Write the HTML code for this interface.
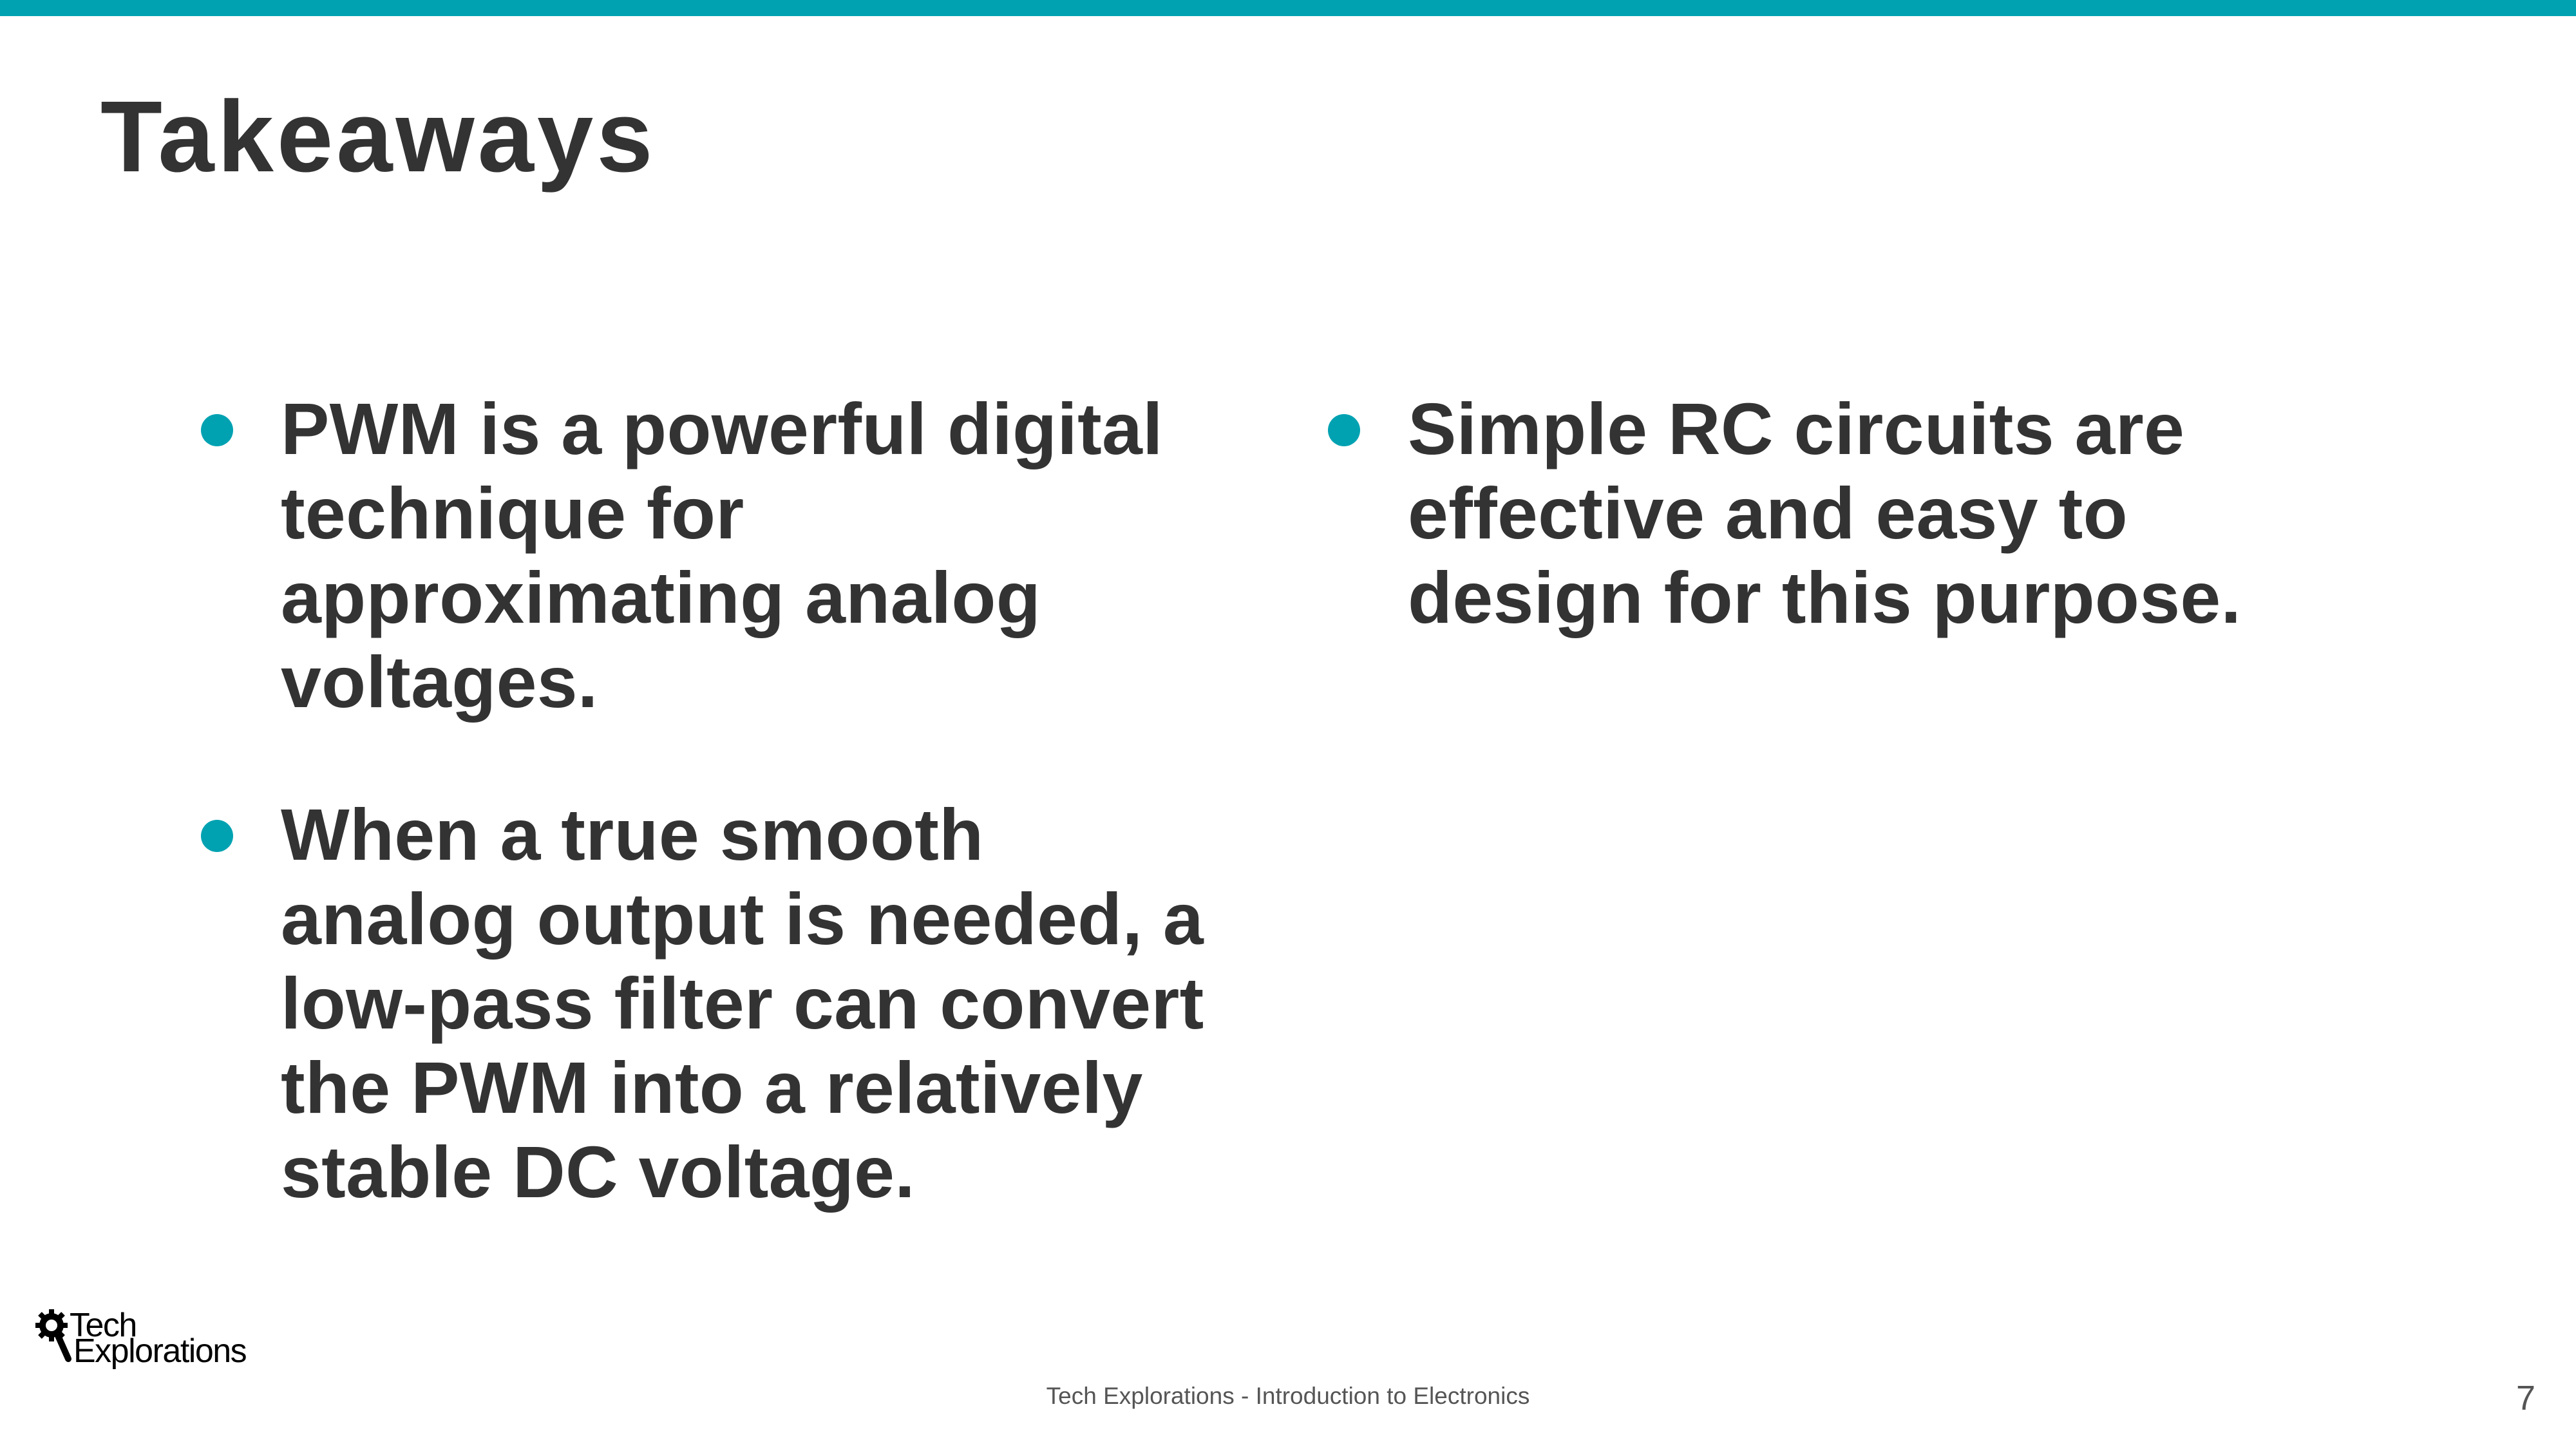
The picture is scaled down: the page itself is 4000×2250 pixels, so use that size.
<!DOCTYPE html>
<html><head><meta charset="utf-8"><style>
html,body{margin:0;padding:0}
body{width:4000px;height:2250px;position:relative;background:#fff;overflow:hidden;font-family:"Liberation Sans",sans-serif;color:#333}
.bar{position:absolute;left:0;top:0;width:4000px;height:25px;background:#00a2b2}
.t{position:absolute;white-space:nowrap;line-height:1}
.title{left:156px;top:134px;font-size:157px;font-weight:bold;letter-spacing:5px}
.line{font-size:113px;font-weight:bold;letter-spacing:0.3px}
.dot{position:absolute;width:50px;height:50px;border-radius:50%;background:#00a2b2}
.foot{font-size:37px;color:#555}
</style></head><body>
<div class="bar"></div>
<div class="t title">Takeaways</div>

<div class="dot" style="left:312px;top:643px"></div>
<div class="t line" style="left:436px;top:610px">PWM is a powerful digital</div>
<div class="t line" style="left:436px;top:741px">technique for</div>
<div class="t line" style="left:436px;top:872px">approximating analog</div>
<div class="t line" style="left:436px;top:1003px">voltages.</div>

<div class="dot" style="left:312px;top:1273px"></div>
<div class="t line" style="left:436px;top:1240px">When a true smooth</div>
<div class="t line" style="left:436px;top:1371px">analog output is needed, a</div>
<div class="t line" style="left:436px;top:1502px">low-pass filter can convert</div>
<div class="t line" style="left:436px;top:1633px">the PWM into a relatively</div>
<div class="t line" style="left:436px;top:1764px">stable DC voltage.</div>

<div class="dot" style="left:2062px;top:643px"></div>
<div class="t line" style="left:2186px;top:610px">Simple RC circuits are</div>
<div class="t line" style="left:2186px;top:741px">effective and easy to</div>
<div class="t line" style="left:2186px;top:872px">design for this purpose.</div>

<svg style="position:absolute;left:50px;top:2030px" width="70" height="90" viewBox="0 0 70 90">
  <g fill="#000">
    <circle cx="30" cy="28" r="19"/>
    <g stroke="#000" stroke-width="8">
      <line x1="30" y1="3" x2="30" y2="53"/>
      <line x1="5" y1="28" x2="55" y2="28"/>
      <line x1="12" y1="10" x2="48" y2="46"/>
      <line x1="48" y1="10" x2="12" y2="46"/>
    </g>
    <circle cx="30" cy="28" r="9" fill="#fff"/>
    <line x1="40" y1="44" x2="56" y2="80" stroke="#000" stroke-width="10" stroke-linecap="round"/>
  </g>
</svg>
<div class="t" style="left:108px;top:2032px;font-size:52px;color:#000;letter-spacing:-1.5px">Tech</div>
<div class="t" style="left:114px;top:2072px;font-size:52px;color:#000;letter-spacing:-1.5px">Explorations</div>

<div class="t foot" style="left:0;width:4000px;text-align:center;top:2149px">Tech Explorations - Introduction to Electronics</div>
<div class="t" style="left:3907px;top:2144px;font-size:54px;color:#555">7</div>
</body></html>
